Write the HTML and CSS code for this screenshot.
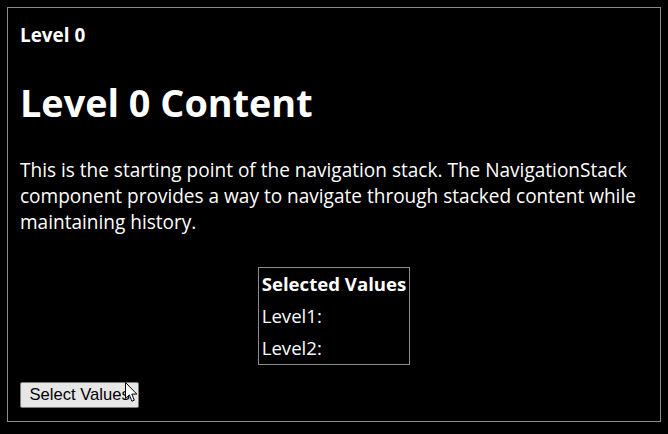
FILE: index.html
```html
<!DOCTYPE html>
<html lang="en">
<head>
<meta charset="utf-8">
<title>Navigation Stack</title>
<link rel="stylesheet" href="styles.css">
</head>
<body>
<div class="stack">
  <div class="stack-title">Level 0</div>
  <h1 class="content-title">Level 0 Content</h1>
  <p class="content-text">This is the starting point of the navigation stack. The NavigationStack component provides a way to navigate through stacked content while maintaining history.</p>
  <table class="values">
    <tr><th>Selected Values</th></tr>
    <tr><td>Level1:</td></tr>
    <tr><td>Level2:</td></tr>
  </table>
  <div class="actions">
    <button class="select-btn" type="button">Select Values</button>
    <svg class="cursor" width="13" height="21" viewBox="0 0 13 21" aria-hidden="true">
      <path d="M0.5 0.5 L0.5 16.5 L4.3 12.9 L6.9 19.2 L9.3 18.2 L6.8 12.1 L11.8 12.1 Z" fill="#fff" stroke="#000" stroke-width="1" stroke-linejoin="round"/>
    </svg>
  </div>
</div>
</body>
</html>
```

FILE: styles.css
```css
html, body {
  background: #000;
}
body {
  margin: 7px;
  color: #fff;
  font-family: "Open Sans", "Noto Sans", sans-serif;
}
.stack {
  border: 1px solid #8c8c8c;
  padding: 12px 12px 13px 12px;
  display: flex;
  flex-direction: column;
  align-items: flex-start;
}
.stack-title {
  font-size: 18.9px;
  font-weight: 700;
  line-height: 30px;
}
.content-title {
  margin: 29px 0 0 0;
  font-size: 37.8px;
  font-weight: 700;
  line-height: 48px;
}
.content-text {
  margin: 30px 0 0 0;
  font-size: 19.05px;
  line-height: 26px;
}
.values {
  margin: 32px 0 0 0;
  align-self: center;
  border: 1px solid #8c8c8c;
  border-collapse: separate;
  border-spacing: 0;
  font-size: 18.6px;
  line-height: 32px;
}
.values th, .values td {
  padding: 0 3px;
  text-align: left;
}
.values th {
  font-weight: 700;
}
.actions {
  margin-top: 17px;
  position: relative;
}
.select-btn {
  font-family: "Liberation Sans", Arial, sans-serif;
  font-size: 16.6px;
  height: 26px;
  padding: 0 8.5px;
  color: #000;
  background: #e6e6e6;
  border: 1px solid #7a7a7a;
  border-radius: 2px;
}
.cursor {
  position: absolute;
  left: 105px;
  top: 0;
}
```
